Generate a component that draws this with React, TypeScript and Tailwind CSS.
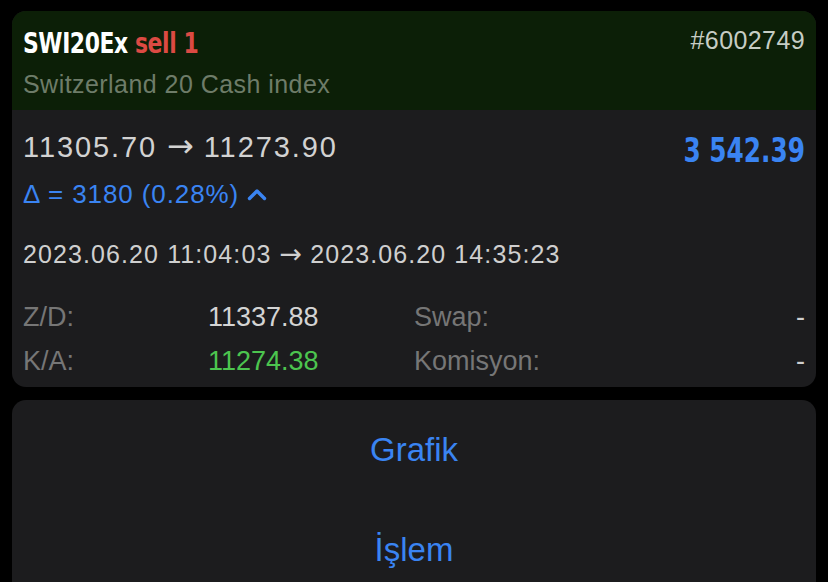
export default function App() {
  const rows = [
    { label: 'Z/D:', value: '11337.88', valueClass: 'text-[#d4d4d4]', label2: 'Swap:', value2: '-' },
    { label: 'K/A:', value: '11274.38', valueClass: 'text-[#4cc54f]', label2: 'Komisyon:', value2: '-' },
  ];

  return (
    <div className="w-[828px] h-[582px] overflow-hidden bg-black px-3 pt-[11px] font-['Liberation_Sans',Arial,sans-serif]">
      <div className="rounded-[14px] overflow-hidden bg-[#1c1c1e]">
        <div className="bg-[#0c1f07] px-[11px] pt-[14px] pb-[11px] flex justify-between">
          <div>
            <div className="h-[36px]">
              <div className="inline-block origin-left [transform:scaleX(0.84)] whitespace-nowrap text-[29px] leading-[36px] font-bold font-['DejaVu_Sans_Condensed','DejaVu_Sans',sans-serif] tracking-[-0.5px]">
                <span className="text-white">SWI20Ex</span>{' '}
                <span className="text-[#dc4a43]">sell 1</span>
              </div>
            </div>
            <div className="mt-2 text-[25px] leading-[30px] tracking-[0.45px] text-[#6e7c69]">Switzerland 20 Cash index</div>
          </div>
          <div className="text-[25px] leading-[30px] tracking-[0.4px] text-[#c6cdc4]">#6002749</div>
        </div>

        <div className="px-[11px] pt-[18px] pb-[9px]">
          <div className="flex justify-between items-start">
            <div>
              <div className="text-[29px] leading-[36px] tracking-[1.9px] text-[#d2d2d2]">
                11305.70 <span className="font-['DejaVu_Sans',sans-serif] text-[32px] tracking-normal">→</span> 11273.90
              </div>
              <div className="mt-[13px] flex items-center gap-[8px] text-[26px] leading-[32px] tracking-[0.9px] text-[#3a84f2]">
                <span>Δ = 3180 (0.28%)</span>
                <svg width="20" height="13" viewBox="0 0 20 13" fill="none">
                  <path d="M2.5 10.5 L10 3 L17.5 10.5" stroke="#3a84f2" strokeWidth="3.4" strokeLinecap="round" strokeLinejoin="round" />
                </svg>
              </div>
            </div>
            <div className="h-[40px] pt-[2px]">
              <div className="inline-block origin-right [transform:scaleX(0.81)] whitespace-nowrap text-[34px] leading-[40px] font-bold font-['DejaVu_Sans_Condensed','DejaVu_Sans',sans-serif] text-[#3a84f2]">
                3 542.39
              </div>
            </div>
          </div>

          <div className="mt-[29px] text-[25px] leading-[30px] tracking-[1.1px] text-[#cfcfcf]">
            2023.06.20 11:04:03 <span className="font-['DejaVu_Sans',sans-serif] text-[27px] tracking-normal">→</span> 2023.06.20 14:35:23
          </div>

          <div className="mt-[31px] flex flex-col gap-[10px]">
            {rows.map((r) => (
              <div key={r.label} className="flex text-[27px] leading-[34px]">
                <div className="w-[185px] text-[#767676]">{r.label}</div>
                <div className={`w-[206px] ${r.valueClass}`}>{r.value}</div>
                <div className="flex-1 text-[#767676]">{r.label2}</div>
                <div className="text-[#cfcfcf]">{r.value2}</div>
              </div>
            ))}
          </div>
        </div>
      </div>

      <div className="mt-[13px] rounded-[14px] bg-[#1c1c1e] h-[200px] flex flex-col items-center pt-[30px]">
        <div className="text-[33px] leading-[40px] text-[#3a84f2]">Grafik</div>
        <div className="mt-[60px] text-[33px] leading-[40px] text-[#3a84f2]">İşlem</div>
      </div>
    </div>
  );
}
